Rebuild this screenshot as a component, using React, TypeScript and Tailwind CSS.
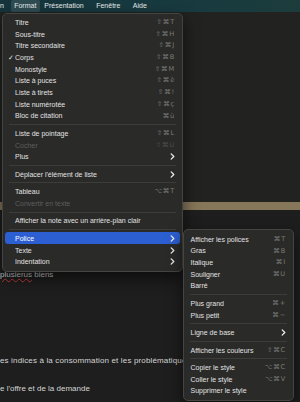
import React from 'react';

type Item =
  | 'sep'
  | { t: string; k?: string; sub?: boolean; disabled?: boolean; check?: boolean; active?: boolean };

const mainItems: Item[] = [
  { t: 'Titre', k: '⇧⌘T' },
  { t: 'Sous-titre', k: '⇧⌘H' },
  { t: 'Titre secondaire', k: '⇧⌘J' },
  { t: 'Corps', k: '⇧⌘B', check: true },
  { t: 'Monostyle', k: '⇧⌘M' },
  { t: 'Liste à puces', k: '⇧⌘è' },
  { t: 'Liste à tirets', k: '⇧⌘!' },
  { t: 'Liste numérotée', k: '⇧⌘ç' },
  { t: 'Bloc de citation', k: '⌘ù' },
  'sep',
  { t: 'Liste de pointage', k: '⇧⌘L' },
  { t: 'Cocher', k: '⇧⌘U', disabled: true },
  { t: 'Plus', sub: true },
  'sep',
  { t: "Déplacer l'élément de liste", sub: true },
  'sep',
  { t: 'Tableau', k: '⌥⌘T' },
  { t: 'Convertir en texte', disabled: true },
  'sep',
  { t: 'Afficher la note avec un arrière-plan clair' },
  'sep',
  { t: 'Police', sub: true, active: true },
  { t: 'Texte', sub: true },
  { t: 'Indentation', sub: true },
];

const subItems: Item[] = [
  { t: 'Afficher les polices', k: '⌘T' },
  { t: 'Gras', k: '⌘B' },
  { t: 'Italique', k: '⌘I' },
  { t: 'Souligner', k: '⌘U' },
  { t: 'Barré' },
  'sep',
  { t: 'Plus grand', k: '⌘+' },
  { t: 'Plus petit', k: '⌘−' },
  'sep',
  { t: 'Ligne de base', sub: true },
  'sep',
  { t: 'Afficher les couleurs', k: '⇧⌘C' },
  'sep',
  { t: 'Copier le style', k: '⌥⌘C' },
  { t: 'Coller le style', k: '⌥⌘V' },
  { t: 'Supprimer le style' },
];

function Chevron() {
  return (
    <svg width="5" height="7" viewBox="0 0 5 7" className="shrink-0">
      <path d="M1.2 0.9 L3.8 3.5 L1.2 6.1" fill="none" stroke="#ececec" strokeWidth="1.3" strokeLinecap="round" strokeLinejoin="round" />
    </svg>
  );
}

function Menu({ items, textPl, pr }: { items: Item[]; textPl: string; pr: string }) {
  return (
    <div className="flex flex-col py-[3px]">
      {items.map((it, i) => {
        if (it === 'sep') {
          return (
            <div key={i} className="h-[5.8px] flex items-center px-[6px]">
              <div className="h-px w-full bg-[#3c3c3a]" />
            </div>
          );
        }
        return (
          <div
            key={i}
            className={`relative h-[11.7px] mx-[2px] flex items-center rounded-[3px] ${textPl} ${pr} ${
              it.active ? 'bg-[#2c5fd2]' : ''
            }`}
          >
            {it.check && (
              <span className="absolute left-[3px] top-0 text-[7px] leading-[11.7px] text-[#e2e2e2]">✓</span>
            )}
            <span
              className={`flex-1 text-[7px] leading-none whitespace-nowrap ${
                it.disabled ? 'text-[#5f5f5d]' : it.active ? 'text-white' : 'text-[#e2e2e2]'
              }`}
            >
              {it.t}
            </span>
            {it.k && (
              <span
                className={`text-[6.6px] leading-none tracking-[0.8px] whitespace-nowrap ${
                  it.disabled ? 'text-[#4e4e4c]' : 'text-[#7a7a78]'
                }`}
                style={{ fontFamily: '"DejaVu Sans", "Liberation Sans", sans-serif' }}
              >
                {it.k}
              </span>
            )}
            {it.sub && <Chevron />}
          </div>
        );
      })}
    </div>
  );
}

export default function App() {
  return (
    <div
      className="relative w-[300px] h-[402px] overflow-hidden bg-[#1e1e1e] flex flex-col"
      style={{ fontFamily: '"Liberation Sans", "DejaVu Sans", sans-serif' }}
    >
      {/* menu bar */}
      <div className="h-[12px] shrink-0 flex items-center bg-gradient-to-r from-[#15343b] via-[#173a40] to-[#1c3c3c] text-[7px] text-[#e6eaea]">
        <span className="w-[10.7px]">n</span>
        <span className="h-full flex items-center px-[3.5px] bg-[#2f4c52] rounded-[2px]">Format</span>
        <span className="ml-[4.5px]">Présentation</span>
        <span className="ml-[12.5px]">Fenêtre</span>
        <span className="ml-[12.5px]">Aide</span>
      </div>

      {/* background document */}
      <div className="h-[190px] shrink-0 bg-[#222221]" />
      <div className="h-[8px] shrink-0 bg-[#86765a]" />
      <div className="flex-1 bg-[#1e1e1e] pt-[60px] text-[8px] leading-[10px] text-[#d4d4d4] whitespace-nowrap">
        <div>
          <span className="underline decoration-wavy decoration-[#c83a3a] decoration-[0.5px] underline-offset-[1px]">plusierus</span> biens
        </div>
        <div className="mt-[76px] tracking-[0.15px]">es indices à la consommation et les problématiques</div>
        <div className="mt-[18px]">e l'offre et de la demande</div>
      </div>

      {/* main Format menu */}
      <div className="absolute left-[2px] top-[12.5px] w-[181px] z-10 rounded-[5px] bg-[#2a2a29] border border-[#444442] shadow-[0_6px_16px_rgba(0,0,0,0.6)]">
        <Menu items={mainItems} textPl="pl-[10px]" pr="pr-[5px]" />
      </div>

      {/* Police submenu */}
      <div className="absolute left-[182.5px] top-[229.3px] w-[111.5px] z-20 rounded-[5px] bg-[#2a2a29] border border-[#444442] shadow-[0_6px_16px_rgba(0,0,0,0.6)]">
        <Menu items={subItems} textPl="pl-[5px]" pr="pr-[5px]" />
      </div>
    </div>
  );
}
